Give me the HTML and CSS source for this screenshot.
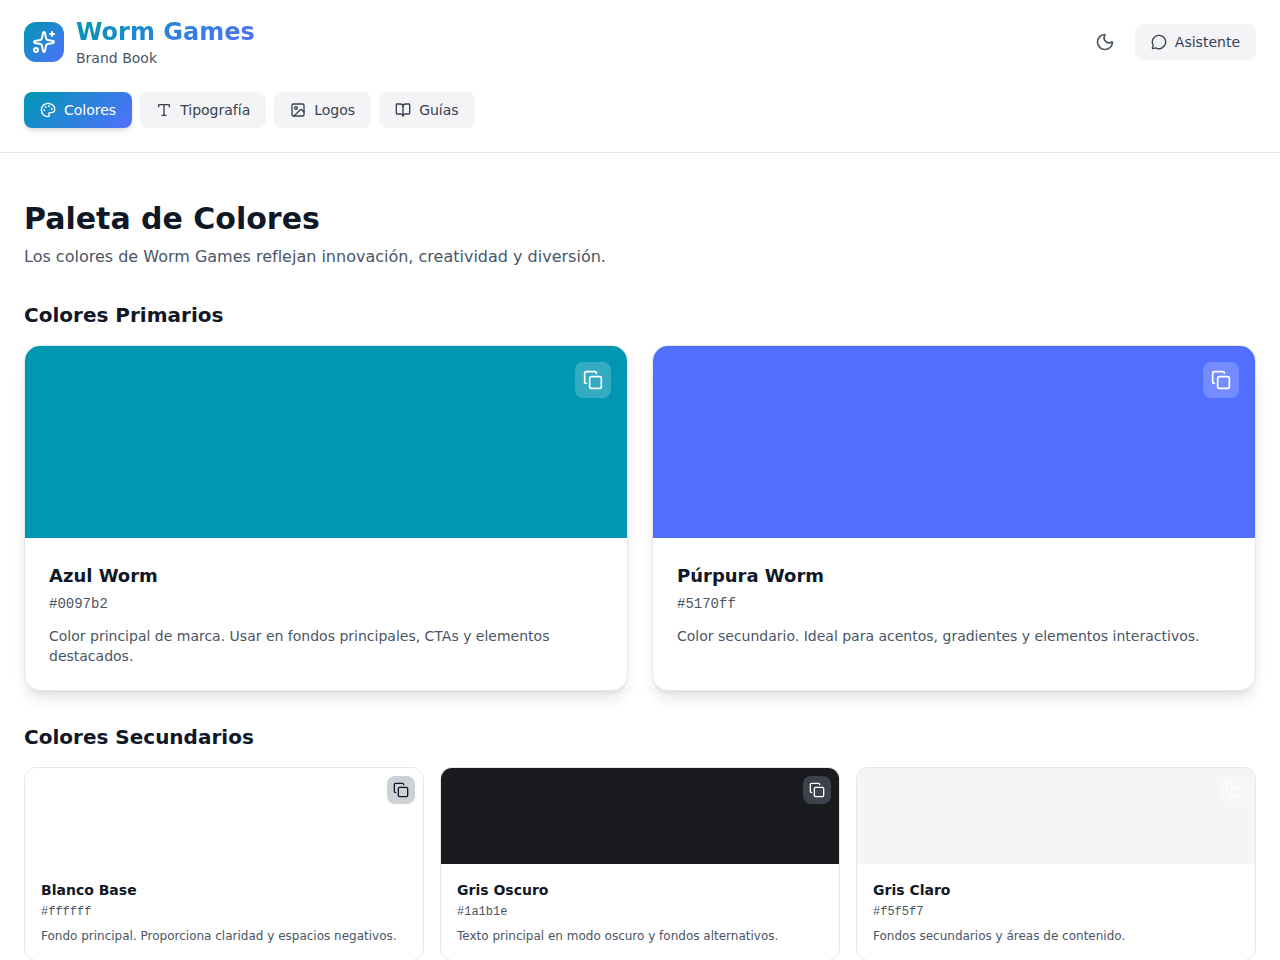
FILE: index.html
```html
<!DOCTYPE html>
<html lang="es">
<head>
<meta charset="utf-8">
<meta name="viewport" content="width=device-width, initial-scale=1">
<title>Worm Games – Brand Book</title>
<link rel="stylesheet" href="styles.css">
</head>
<body>
<svg class="sprite" aria-hidden="true">
  <symbol id="copy" viewBox="0 0 24 24"><rect width="14" height="14" x="8" y="8" rx="2"/><path d="M4 16c-1.1 0-2-.9-2-2V4c0-1.1.9-2 2-2h10c1.1 0 2 .9 2 2"/></symbol>
</svg>
<header class="header">
  <div class="header-top">
    <div class="brand">
      <div class="brand-mark">
        <svg class="icon icon-lg" viewBox="0 0 24 24" aria-hidden="true"><path d="M11.017 2.814a1 1 0 0 1 1.966 0l1.051 5.558a2 2 0 0 0 1.594 1.594l5.558 1.051a1 1 0 0 1 0 1.966l-5.558 1.051a2 2 0 0 0-1.594 1.594l-1.051 5.558a1 1 0 0 1-1.966 0l-1.051-5.558a2 2 0 0 0-1.594-1.594l-5.558-1.051a1 1 0 0 1 0-1.966l5.558-1.051a2 2 0 0 0 1.594-1.594z"/><path d="M20 2v4"/><path d="M22 4h-4"/><circle cx="4" cy="20" r="2"/></svg>
      </div>
      <div>
        <h1 class="brand-name">Worm Games</h1>
        <p class="brand-sub">Brand Book</p>
      </div>
    </div>
    <div class="actions">
      <button class="icon-button" type="button" aria-label="Modo oscuro">
        <svg class="icon icon-md" viewBox="0 0 24 24" aria-hidden="true"><path d="M20.985 12.486a9 9 0 1 1-9.473-9.472c.405-.022.617.46.402.803a6 6 0 0 0 8.268 8.268c.344-.215.825-.004.803.401"/></svg>
      </button>
      <button class="button" type="button">
        <svg class="icon" viewBox="0 0 24 24" aria-hidden="true"><path d="M2.992 16.342a2 2 0 0 1 .094 1.167l-1.065 3.29a1 1 0 0 0 1.236 1.168l3.413-.998a2 2 0 0 1 1.099.092 10 10 0 1 0-4.777-4.719"/></svg>
        Asistente
      </button>
    </div>
  </div>
  <nav class="tabs" aria-label="Secciones">
    <button class="button button-active" type="button" aria-current="page">
      <svg class="icon" viewBox="0 0 24 24" aria-hidden="true"><path d="M12 22a1 1 0 0 1 0-20 10 9 0 0 1 10 9 5 5 0 0 1-5 5h-2.25a1.75 1.75 0 0 0-1.4 2.8l.3.4a1.75 1.75 0 0 1-1.4 2.8z"/><g fill="currentColor"><circle cx="13.5" cy="6.5" r=".5"/><circle cx="17.5" cy="10.5" r=".5"/><circle cx="6.5" cy="12.5" r=".5"/><circle cx="8.5" cy="7.5" r=".5"/></g></svg>
      Colores
    </button>
    <button class="button" type="button">
      <svg class="icon" viewBox="0 0 24 24" aria-hidden="true"><path d="M12 4v16"/><path d="M4 7V5a1 1 0 0 1 1-1h14a1 1 0 0 1 1 1v2"/><path d="M9 20h6"/></svg>
      Tipografía
    </button>
    <button class="button" type="button">
      <svg class="icon" viewBox="0 0 24 24" aria-hidden="true"><rect width="18" height="18" x="3" y="3" rx="2"/><circle cx="9" cy="9" r="2"/><path d="m21 15-3.086-3.086a2 2 0 0 0-2.828 0L6 21"/></svg>
      Logos
    </button>
    <button class="button" type="button">
      <svg class="icon" viewBox="0 0 24 24" aria-hidden="true"><path d="M12 7v14"/><path d="M3 18a1 1 0 0 1-1-1V4a1 1 0 0 1 1-1h5a4 4 0 0 1 4 4 4 4 0 0 1 4-4h5a1 1 0 0 1 1 1v13a1 1 0 0 1-1 1h-6a3 3 0 0 0-3 3 3 3 0 0 0-3-3z"/></svg>
      Guías
    </button>
  </nav>
</header>
<main class="main">
  <div>
    <h2 class="page-title">Paleta de Colores</h2>
    <p class="page-lead">Los colores de Worm Games reflejan innovación, creatividad y diversión.</p>
  </div>
  <section class="section">
    <h3 class="section-title">Colores Primarios</h3>
    <div class="grid-primary">
      <article class="card card-large">
        <div class="swatch swatch-blue">
          <button class="copy" type="button" aria-label="Copiar #0097b2"><svg class="icon icon-md"><use href="#copy"/></svg></button>
        </div>
        <div class="card-body">
          <h4 class="card-title">Azul Worm</h4>
          <p class="card-hex">#0097b2</p>
          <p class="card-text">Color principal de marca. Usar en fondos principales, CTAs y elementos destacados.</p>
        </div>
      </article>
      <article class="card card-large">
        <div class="swatch swatch-purple">
          <button class="copy" type="button" aria-label="Copiar #5170ff"><svg class="icon icon-md"><use href="#copy"/></svg></button>
        </div>
        <div class="card-body">
          <h4 class="card-title">Púrpura Worm</h4>
          <p class="card-hex">#5170ff</p>
          <p class="card-text">Color secundario. Ideal para acentos, gradientes y elementos interactivos.</p>
        </div>
      </article>
    </div>
  </section>
  <section class="section">
    <h3 class="section-title">Colores Secundarios</h3>
    <div class="grid-secondary">
      <article class="card">
        <div class="swatch swatch-white">
          <button class="copy copy-on-white" type="button" aria-label="Copiar #ffffff"><svg class="icon"><use href="#copy"/></svg></button>
        </div>
        <div class="card-body">
          <h4 class="card-title">Blanco Base</h4>
          <p class="card-hex">#ffffff</p>
          <p class="card-text">Fondo principal. Proporciona claridad y espacios negativos.</p>
        </div>
      </article>
      <article class="card">
        <div class="swatch swatch-dark">
          <button class="copy copy-on-dark" type="button" aria-label="Copiar #1a1b1e"><svg class="icon"><use href="#copy"/></svg></button>
        </div>
        <div class="card-body">
          <h4 class="card-title">Gris Oscuro</h4>
          <p class="card-hex">#1a1b1e</p>
          <p class="card-text">Texto principal en modo oscuro y fondos alternativos.</p>
        </div>
      </article>
      <article class="card">
        <div class="swatch swatch-light">
          <button class="copy" type="button" aria-label="Copiar #f5f5f7"><svg class="icon"><use href="#copy"/></svg></button>
        </div>
        <div class="card-body">
          <h4 class="card-title">Gris Claro</h4>
          <p class="card-hex">#f5f5f7</p>
          <p class="card-text">Fondos secundarios y áreas de contenido.</p>
        </div>
      </article>
    </div>
  </section>
</main>
</body>
</html>
```

FILE: styles.css
```css
:root {
  --blue: #0097b2;
  --purple: #5170ff;
  --ink: #101828;
  --text: #364153;
  --muted: #4a5565;
  --line: #e5e7eb;
  --soft: #f4f4f6;
  --gradient: linear-gradient(135deg, var(--blue), var(--purple));
}

* {
  box-sizing: border-box;
  margin: 0;
}

body {
  background: #fff;
  color: var(--ink);
  font: 16px/24px "DejaVu Sans", sans-serif;
}

button {
  border: 0;
  background: none;
  color: inherit;
  font: inherit;
  cursor: pointer;
}

.sprite {
  display: none;
}

.icon {
  display: block;
  flex: none;
  width: 16px;
  height: 16px;
  fill: none;
  stroke: currentColor;
  stroke-width: 2;
  stroke-linecap: round;
  stroke-linejoin: round;
}

.icon-md {
  width: 20px;
  height: 20px;
}

.icon-lg {
  width: 24px;
  height: 24px;
}

.header {
  display: grid;
  gap: 24px;
  padding: 16px 24px 24px;
  border-bottom: 1px solid var(--line);
}

.header-top {
  display: flex;
  align-items: center;
  justify-content: space-between;
}

.brand,
.actions {
  display: flex;
  align-items: center;
  gap: 12px;
}

.brand-mark {
  padding: 8px;
  border-radius: 12px;
  background: var(--gradient);
  color: #fff;
}

.brand-name {
  background: var(--gradient);
  background-clip: text;
  color: transparent;
  font-size: 24px;
  line-height: 32px;
}

.brand-sub {
  color: var(--muted);
  font-size: 14px;
  line-height: 20px;
}

.icon-button {
  padding: 8px;
  border-radius: 8px;
  color: var(--muted);
}

.tabs {
  display: flex;
  flex-wrap: wrap;
  gap: 8px;
}

.button {
  display: flex;
  align-items: center;
  gap: 8px;
  padding: 8px 16px;
  border-radius: 8px;
  background: var(--soft);
  color: var(--text);
  font-size: 14px;
  line-height: 20px;
}

.button-active {
  background: var(--gradient);
  box-shadow: 0 4px 6px -1px rgb(0 0 0 / 10%), 0 2px 4px -2px rgb(0 0 0 / 10%);
  color: #fff;
}

.main {
  display: grid;
  gap: 32px;
  padding: 48px 24px;
}

.page-title {
  margin-bottom: 8px;
  font-size: 30px;
  line-height: 36px;
}

.page-lead {
  color: var(--muted);
}

.section-title {
  margin-bottom: 16px;
  font-size: 20px;
  line-height: 28px;
}

.grid-primary,
.grid-secondary {
  display: grid;
  grid-template-columns: repeat(2, minmax(0, 1fr));
  gap: 24px;
}

.grid-secondary {
  grid-template-columns: repeat(3, minmax(0, 1fr));
  gap: 16px;
}

.card {
  overflow: hidden;
  border: 1px solid var(--line);
  border-radius: 12px;
  background: #fff;
}

.swatch {
  display: flex;
  align-items: flex-start;
  justify-content: flex-end;
  height: 96px;
  padding: 8px;
}

.swatch-blue { background: var(--blue); }
.swatch-purple { background: var(--purple); }
.swatch-white { background: #fff; }
.swatch-dark { background: #1a1b1e; }
.swatch-light { background: #f5f5f7; }

.copy {
  padding: 6px;
  border-radius: 8px;
  background: rgb(255 255 255 / 20%);
  color: #fff;
}

.copy-on-white {
  background: #cdd0d5;
  color: var(--ink);
}

.copy-on-dark {
  background: #3d424d;
}

.card-body {
  padding: 16px;
}

.card-title {
  margin-bottom: 4px;
  font-size: 14px;
  line-height: 20px;
}

.card-hex {
  margin-bottom: 8px;
  color: var(--muted);
  font: 12px/16px "Liberation Mono", monospace;
}

.card-text {
  color: var(--muted);
  font-size: 12px;
  line-height: 16px;
}

.card-large {
  border-radius: 16px;
  box-shadow: 0 10px 15px -3px rgb(0 0 0 / 10%), 0 4px 6px -4px rgb(0 0 0 / 10%);
}

.card-large .swatch {
  height: 192px;
  padding: 16px;
}

.card-large .copy {
  padding: 8px;
}

.card-large .card-body {
  padding: 24px;
}

.card-large .card-title {
  font-size: 18px;
  line-height: 28px;
}

.card-large .card-hex {
  margin-bottom: 12px;
  font-size: 14px;
  line-height: 20px;
}

.card-large .card-text {
  font-size: 14px;
  line-height: 20px;
}

@media (max-width: 760px) {
  .grid-primary,
  .grid-secondary {
    grid-template-columns: minmax(0, 1fr);
  }
}
```
